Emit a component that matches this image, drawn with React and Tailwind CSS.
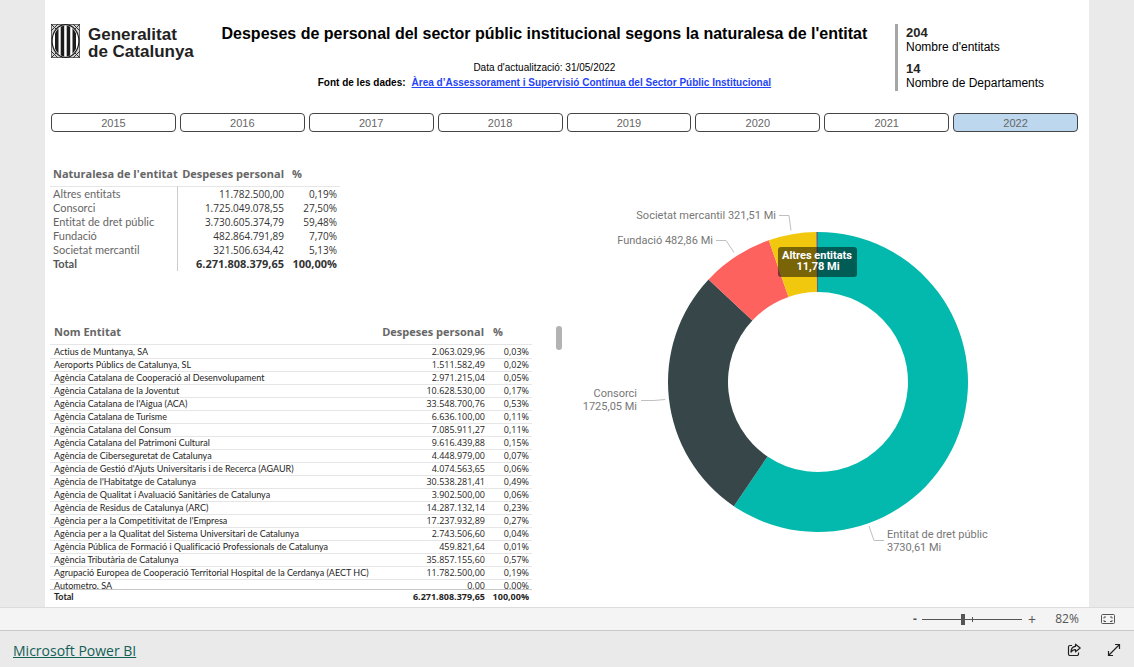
import { useState } from 'react'

const YEARS = [2015, 2016, 2017, 2018, 2019, 2020, 2021, 2022]

const NATURALESA = [
  ['Altres entitats', '11.782.500,00', '0,19%'],
  ['Consorci', '1.725.049.078,55', '27,50%'],
  ['Entitat de dret públic', '3.730.605.374,79', '59,48%'],
  ['Fundació', '482.864.791,89', '7,70%'],
  ['Societat mercantil', '321.506.634,42', '5,13%'],
]

const ENTITATS = [
  ['Actius de Muntanya, SA', '2.063.029,96', '0,03%'],
  ['Aeroports Públics de Catalunya, SL', '1.511.582,49', '0,02%'],
  ['Agència Catalana de Cooperació al Desenvolupament', '2.971.215,04', '0,05%'],
  ['Agència Catalana de la Joventut', '10.628.530,00', '0,17%'],
  ["Agència Catalana de l'Aigua (ACA)", '33.548.700,76', '0,53%'],
  ['Agència Catalana de Turisme', '6.636.100,00', '0,11%'],
  ['Agència Catalana del Consum', '7.085.911,27', '0,11%'],
  ['Agència Catalana del Patrimoni Cultural', '9.616.439,88', '0,15%'],
  ['Agència de Ciberseguretat de Catalunya', '4.448.979,00', '0,07%'],
  ["Agència de Gestió d'Ajuts Universitaris i de Recerca (AGAUR)", '4.074.563,65', '0,06%'],
  ["Agència de l'Habitatge de Catalunya", '30.538.281,41', '0,49%'],
  ['Agència de Qualitat i Avaluació Sanitàries de Catalunya', '3.902.500,00', '0,06%'],
  ['Agència de Residus de Catalunya (ARC)', '14.287.132,14', '0,23%'],
  ["Agència per a la Competitivitat de l'Empresa", '17.237.932,89', '0,27%'],
  ['Agència per a la Qualitat del Sistema Universitari de Catalunya', '2.743.506,60', '0,04%'],
  ['Agència Pública de Formació i Qualificació Professionals de Catalunya', '459.821,64', '0,01%'],
  ['Agència Tributària de Catalunya', '35.857.155,60', '0,57%'],
  ['Agrupació Europea de Cooperació Territorial Hospital de la Cerdanya (AECT HC)', '11.782.500,00', '0,19%'],
  ['Autometro, SA', '0,00', '0,00%'],
]

const SECTORS = [
  { nom: 'Entitat de dret públic', valor: 3730.61, color: '#03b8ac' },
  { nom: 'Consorci', valor: 1725.05, color: '#374649' },
  { nom: 'Fundació', valor: 482.86, color: '#fd625e' },
  { nom: 'Societat mercantil', valor: 321.51, color: '#f2c80f' },
  { nom: 'Altres entitats', valor: 11.78, color: '#5f6b6d' },
]

function Logo() {
  return (
    <div className="flex items-start gap-2">
      <svg viewBox="0 0 29 34" className="w-[29px] h-[34px]" aria-hidden="true">
        <rect x="0.5" y="0.5" width="28" height="33" fill="#d4d4d4" stroke="#666" />
        <path d="M0 0l8 8M29 0l-8 8M0 34l8-8M29 34l-8-8M0 7l7-7M22 0l7 7M0 27l7 7M22 34l7-7" stroke="#333" />
        <clipPath id="escut"><ellipse cx="14.5" cy="17" rx="12" ry="15.5" /></clipPath>
        <ellipse cx="14.5" cy="17" rx="13.4" ry="16.4" fill="#fff" stroke="#1c1c1c" strokeWidth="1.2" />
        <g clipPath="url(#escut)" fill="#1c1c1c">
          <rect x="4" y="0" width="3.500" height="34" />
          <rect x="9.700" y="0" width="3.500" height="34" />
          <rect x="15.700" y="0" width="3.500" height="34" />
          <rect x="21.500" y="0" width="3.500" height="34" />
        </g>
      </svg>
      <p className="pt-[2px] font-bold text-[17px] leading-[17px] text-[#222] whitespace-nowrap">
        Generalitat<br />de Catalunya
      </p>
    </div>
  )
}

function Indicador({ valor, nom }) {
  return (
    <div>
      <dd className="font-bold text-[13px] leading-[15px] text-[#252423]">{valor}</dd>
      <dt className="text-[12px] leading-[15px]">{nom}</dt>
    </div>
  )
}

function arc(inici, fi) {
  const punt = (r, t) => {
    const a = t * 2 * Math.PI
    return `${(238 + r * Math.sin(a)).toFixed(2)} ${(182 - r * Math.cos(a)).toFixed(2)}`
  }
  const gran = fi - inici > 0.5 ? 1 : 0
  return `M${punt(150, inici)}A150 150 0 ${gran} 1 ${punt(150, fi)}L${punt(90, fi)}A90 90 0 ${gran} 0 ${punt(90, inici)}Z`
}

function Donut() {
  const total = SECTORS.reduce((s, x) => s + x.valor, 0)
  let acumulat = 0
  const sectors = SECTORS.map(s => {
    const inici = acumulat / total
    acumulat += s.valor
    return { ...s, d: arc(inici, acumulat / total) }
  })

  return (
    <svg viewBox="0 0 420 360" className="w-[420px] h-[360px] font-['Roboto',sans-serif] text-[11px]"
      role="img" aria-label="Despeses de personal per naturalesa de l'entitat">
      {sectors.map(s => <path key={s.nom} d={s.d} fill={s.color} />)}
      <g fill="none" stroke="#c0c0c0">
        <path d="M199 15.500h10l2 15" />
        <path d="M136 40.500h10l8 12" />
        <path d="M61 200.500h13l11-1" />
        <path d="M289 326l5 14.500h10" />
      </g>
      <g fill="#777">
        <text x="196" y="19" textAnchor="end">Societat mercantil 321,51 Mi</text>
        <text x="133" y="44" textAnchor="end">Fundació 482,86 Mi</text>
        <text x="57" y="197" textAnchor="end">Consorci</text>
        <text x="57" y="210" textAnchor="end">1725,05 Mi</text>
        <text x="307" y="338">Entitat de dret públic</text>
        <text x="307" y="351">3730,61 Mi</text>
      </g>
      <rect x="198" y="47" width="79" height="30" rx="3" fill="#000" fillOpacity="0.5" />
      <g fill="#fff" fontWeight="700" textAnchor="middle">
        <text x="237" y="59">Altres entitats</text>
        <text x="238" y="70">11,78 Mi</text>
      </g>
    </svg>
  )
}

function TaulaNaturalesa() {
  return (
    <table className="-ml-px w-[290px] table-fixed text-[11px] leading-[14px]">
      <colgroup>
        <col className="w-[127px]" />
        <col className="w-[110px]" />
        <col />
      </colgroup>
      <thead>
        <tr className="h-[24px] border-b border-[#e6e6e6] font-extrabold text-[#666] whitespace-nowrap">
          <th className="text-left pl-[3px]">Naturalesa de l'entitat</th>
          <th className="text-right pr-[3px]">Despeses personal</th>
          <th className="text-left pl-[5px]">%</th>
        </tr>
      </thead>
      <tbody className="text-[#333]">
        {NATURALESA.map(([nom, import_, pct]) => (
          <tr key={nom}>
            <td className="pl-[3px] font-['Lato',sans-serif] text-[#666] border-r border-[#ccc]">{nom}</td>
            <td className="text-right text-[10px] leading-[14px] pr-[3px]">{import_}</td>
            <td className="text-right text-[10px] leading-[14px] pr-[3px]">{pct}</td>
          </tr>
        ))}
        <tr className="font-bold">
          <td className="pl-[3px] font-['Lato',sans-serif] text-[#555] border-r border-[#ccc]">Total</td>
          <td className="text-right pr-[3px]">6.271.808.379,65</td>
          <td className="text-right pr-[3px]">100,00%</td>
        </tr>
      </tbody>
    </table>
  )
}

function Columnes() {
  return (
    <colgroup>
      <col />
      <col className="w-[108px]" />
      <col className="w-[44px]" />
    </colgroup>
  )
}

function TaulaEntitats() {
  return (
    <div className="w-[482px] text-[9px] leading-[12px] text-[#252423] whitespace-nowrap">
      <div className="h-[268px] overflow-y-auto [scrollbar-width:none]">
        <table className="w-full table-fixed">
          <Columnes />
          <thead>
            <tr className="h-[24px] border-b border-[#e6e6e6] text-[11px] font-extrabold text-[#666]">
              <th className="text-left pl-[4px]">Nom Entitat</th>
              <th className="text-right pr-[4px]">Despeses personal</th>
              <th className="text-left pl-[5px]">%</th>
            </tr>
          </thead>
          <tbody>
            {ENTITATS.map(([nom, import_, pct]) => (
              <tr key={nom} className="border-b border-[#e6e6e6] first:h-[14px]">
                <td className="pl-[4px] font-['Lato',sans-serif]">{nom}</td>
                <td className="text-right pr-[3px]">{import_}</td>
                <td className="text-right pr-[3px]">{pct}</td>
              </tr>
            ))}
          </tbody>
        </table>
      </div>
      <table className="w-full table-fixed border-t border-[#c8c8c8] font-bold">
        <Columnes />
        <tbody>
          <tr className="h-[15px]">
            <td className="pl-[4px] font-['Lato',sans-serif]">Total</td>
            <td className="text-right pr-[3px]">6.271.808.379,65</td>
            <td className="text-right pr-[3px]">100,00%</td>
          </tr>
        </tbody>
      </table>
    </div>
  )
}

export default function App() {
  const [any, setAny] = useState(2022)
  const [zoom, setZoom] = useState(82)

  return (
    <div className="min-h-screen flex flex-col bg-[#eaeaea] text-black font-['Liberation_Sans',Arial,sans-serif]">
      <main className="flex-1 mx-[45px] bg-white pl-[6px] pr-[11px]">
        <header className="flex items-start pt-[24px]">
          <Logo />
          <div className="flex-1 text-center">
            <h1 className="text-[16px] leading-[20px] font-bold whitespace-nowrap">
              Despeses de personal del sector públic institucional segons la naturalesa de l'entitat
            </h1>
            <p className="mt-[16px] text-[10px] leading-[15px]">Data d'actualització: 31/05/2022</p>
            <p className="text-[10px] leading-[15px] font-bold">
              Font de les dades:
              <a href="#" className="ml-[6px] text-[#1f45f5] underline">
                Àrea d’Assessorament i Supervisió Contínua del Sector Públic Institucional
              </a>
            </p>
          </div>
          <dl className="w-[183px] border-l-[3px] border-[#a6a6a6] pl-[8px] pt-px space-y-[6px]">
            <Indicador valor="204" nom="Nombre d'entitats" />
            <Indicador valor="14" nom="Nombre de Departaments" />
          </dl>
        </header>

        {/* Selector d'any */}
        <div className="mt-[22px] grid grid-cols-8 gap-1">
          {YEARS.map(y => (
            <button key={y} onClick={() => setAny(y)} aria-pressed={any === y}
              className={`h-[19px] rounded-[4px] border border-[#444] text-[11px] leading-[16px] text-[#666] ${any === y ? 'bg-[#bdd7ee]' : 'bg-white'}`}>
              {y}
            </button>
          ))}
        </div>

        <div className="flex">
          <div className="w-[529px] shrink-0 pt-[30px] font-['Open_Sans','Noto_Sans',sans-serif] [font-variant-ligatures:none]">
            <TaulaNaturalesa />
            <div className="mt-[50px] -ml-px flex items-start justify-between">
              <TaulaEntitats />
              <div className="mt-[5px] mr-[18px] w-[6px] h-[24px] rounded-full bg-[#b3b3b3]" />
            </div>
          </div>
          <div className="flex-1 pt-[68px]">
            <Donut />
          </div>
        </div>
      </main>

      <div className="h-[23px] flex items-center justify-end pr-[19px] border-t border-[#dcdcdc] bg-[#f4f4f4] text-[#555] text-[12px] font-['Open_Sans','Noto_Sans',sans-serif]">
        <button aria-label="Redueix" onClick={() => setZoom(z => Math.max(0, z - 10))} className="w-[14px] font-bold">-</button>
        <div className="relative flex items-center">
          <span className="absolute left-[50px] w-px h-[5px] bg-[#555]" />
          <input type="range" min="0" max="200" value={zoom} onChange={e => setZoom(Number(e.target.value))} aria-label="Zoom"
            className="w-[100px] h-px appearance-none bg-[#555] [&::-webkit-slider-thumb]:appearance-none [&::-webkit-slider-thumb]:w-[4px] [&::-webkit-slider-thumb]:h-[11px] [&::-webkit-slider-thumb]:bg-[#555]" />
        </div>
        <button aria-label="Amplia" onClick={() => setZoom(z => Math.min(200, z + 10))} className="w-[20px] text-[14px]">+</button>
        <span className="w-[50px] text-center">{zoom}%</span>
        <button aria-label="Ajusta a la pàgina" className="ml-[9px]">
          <svg viewBox="0 0 14 10" className="w-[14px] h-[10px]" fill="none" stroke="#555">
            <rect x="0.5" y="0.5" width="13" height="9" rx="1" />
            <path d="M3 4.500v-1.500h2M9 3h2v1.500M11 6v1.500h-2M5 7.500h-2v-1.500" />
          </svg>
        </button>
      </div>

      <footer className="h-[37px] border-t border-[#c8c8c8] flex items-center justify-between px-[13px] pt-[2px] font-['Open_Sans','Noto_Sans',sans-serif]">
        <a href="#" className="text-[14px] text-[#126057] underline">Microsoft Power BI</a>
        <div className="flex items-center gap-[26px]">
          <button aria-label="Comparteix">
            <svg viewBox="0 0 14 14" className="w-[14px] h-[14px]" fill="none" stroke="#222" strokeWidth="1.2" strokeLinejoin="round">
              <path d="M5 2.500H3a1.500 1.500 0 0 0-1.500 1.500v7A1.500 1.500 0 0 0 3 12.500h7a1.500 1.500 0 0 0 1.500-1.500V9.500" />
              <path d="M8.500 1.200l4.700 3.800l-4.700 3.800v-2.200c-2 0-3.500.6-4.500 2.500c0-3 1.500-5.400 4.500-5.700z" />
            </svg>
          </button>
          <button aria-label="Pantalla completa">
            <svg viewBox="0 0 14 14" className="w-[14px] h-[14px]" fill="none" stroke="#222" strokeWidth="1.2">
              <path d="M1.500 12.500l11-11M8 1.500h4.500V6M1.500 8v4.500H6" />
            </svg>
          </button>
        </div>
      </footer>
    </div>
  )
}
